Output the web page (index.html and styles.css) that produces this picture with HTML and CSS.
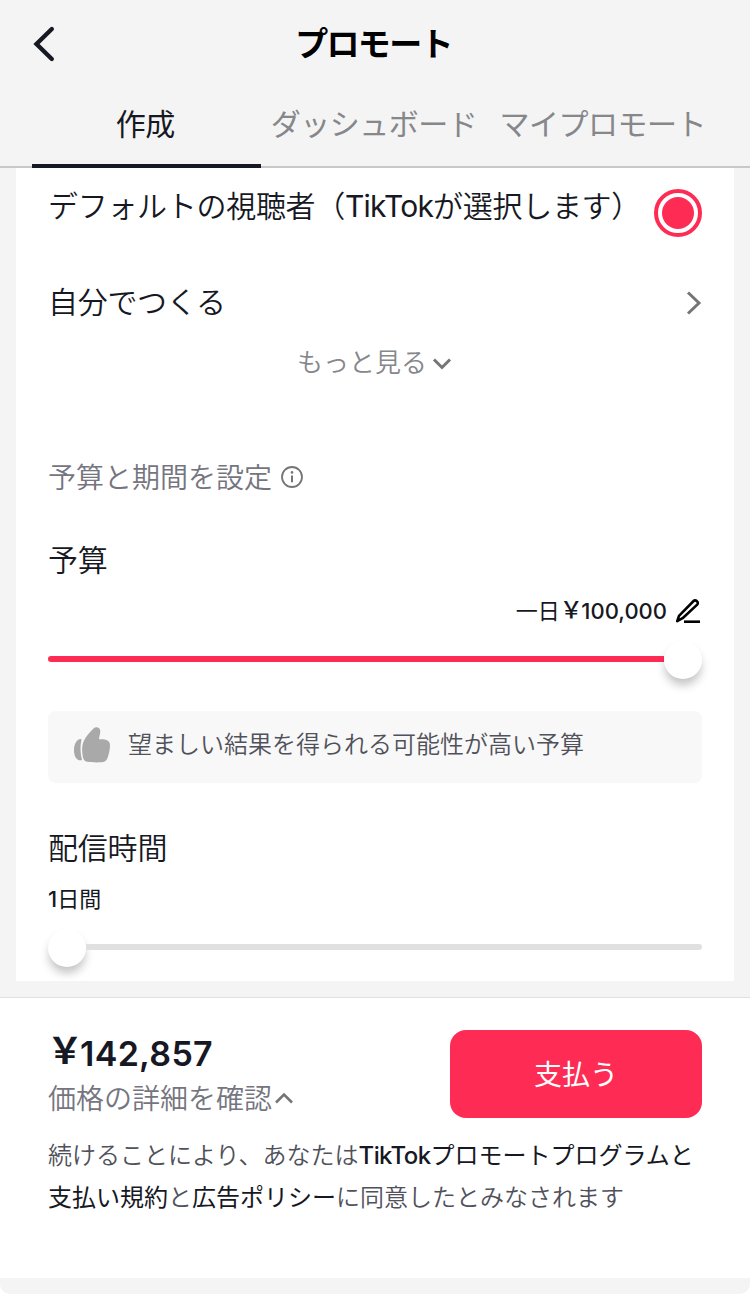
FILE: index.html
```html
<!DOCTYPE html>
<html lang="ja">
<head>
  <meta charset="UTF-8">
  <meta name="viewport" content="width=device-width, initial-scale=1.0">
  <title>プロモート</title>
  <link rel="stylesheet" href="styles.css">
</head>
<body>
  <div class="page">

    <!-- Top bar -->
    <header class="header">
      <svg class="back" width="24" height="38" viewBox="0 0 24 38" fill="none" stroke="#161823" stroke-width="4.4" stroke-linecap="round" stroke-linejoin="miter"><path d="M19.800 4 4.500 19l15.300 15"/></svg>
      <h1>プロモート</h1>
    </header>

    <nav class="tabs">
      <div class="tab active"><span>作成</span></div>
      <div class="tab"><span>ダッシュボード</span></div>
      <div class="tab"><span>マイプロモート</span></div>
    </nav>

    <main class="card">
      <!-- Audience -->
      <div class="row audience">
        <span>デフォルトの視聴者（<span class="latin">TikTok</span>が選択します）</span>
        <i class="radio"></i>
      </div>
      <div class="row custom">
        <span>自分でつくる</span>
        <svg width="16" height="24" viewBox="0 0 16 24" fill="none" stroke="#757575" stroke-width="3"><path d="M2 1.500 13 12 2 22.500"/></svg>
      </div>
      <div class="more">
        <span>もっと見る</span>
        <svg width="20" height="14" viewBox="0 0 20 14" fill="none" stroke="#757575" stroke-width="3"><path d="M2 2.500 10 10.500l8-8"/></svg>
      </div>

      <!-- Budget -->
      <div class="section-title">
        <span>予算と期間を設定</span>
        <svg width="24" height="24" viewBox="0 0 24 24" fill="none" stroke="#757575"><circle cx="12" cy="12" r="10" stroke-width="1.800"/><path d="M12 10.500v6.800" stroke-width="2"/><circle cx="12" cy="7.400" r="1.300" fill="#757575" stroke="none"/></svg>
      </div>
      <h2 class="budget-title">予算</h2>
      <div class="amount">
        <span>一日<b class="yen">￥</b><b>100,000</b></span>
        <svg width="26" height="26" viewBox="0 0 26 26" fill="none" stroke="#000" stroke-width="2.600" stroke-linejoin="round"><path d="M2.200 23.200 4 17.800 18.600 3a2.100 2.100 0 0 1 3 0l.6.6a2.100 2.100 0 0 1 0 3L7.600 20.200Z"/><path d="M9 23.700h16"/></svg>
      </div>
      <div class="slider full"><div class="track"></div><div class="thumb"></div></div>
      <div class="tip">
        <svg width="36" height="36" viewBox="0 0 36 36" fill="#a9a9a9"><path d="M6 12C2.500 13 0 17 0 23c0 5.500 2 9.500 5 10.200 1.500.3 3.200.2 3-.5C6.200 27 6.100 19 7.300 13.500c.3-1.300 0-1.800-1.300-1.500Z"/><path d="M9.800 14C12 9 16 5 19.500 1.500c2.500-2.500 6.800-1.300 6.800 2.500 0 3-1.200 5.600-1.300 8.200C29 12.200 36 12 36 18c0 5-1.200 9.500-2.500 13-1.100 3-3.200 4.200-6.200 4.300-5 .2-10.300.1-14-.5-3.300-.5-4-2.800-4.600-5.800C7.800 24.500 7.800 18.500 9.800 14Z"/></svg>
        <span>望ましい結果を得られる可能性が高い予算</span>
      </div>

      <!-- Duration -->
      <h2 class="duration-title">配信時間</h2>
      <div class="days"><b>1</b>日間</div>
      <div class="slider"><div class="track"></div><div class="thumb"></div></div>
    </main>

    <!-- Payment -->
    <footer class="footer">
      <div class="pay">
        <div class="total">
          <div class="price"><span class="yen">￥</span>142,857</div>
          <div class="detail">
            <span>価格の詳細を確認</span>
            <svg width="20" height="14" viewBox="0 0 20 14" fill="none" stroke="#757575" stroke-width="2.600"><path d="M2 11.500 10 3.500l8 8"/></svg>
          </div>
        </div>
        <button class="pay-button">支払う</button>
      </div>
      <p class="terms">続けることにより、あなたは<b><span class="latin">TikTok</span>プロモートプログラムと<br>支払い規約</b>と<b>広告ポリシー</b>に同意したとみなされます</p>
    </footer>

  </div>
</body>
</html>
```
FILE: styles.css
```css
* {
  box-sizing: border-box;
}

body {
  margin: 0;
  background: #fff;
  font-family: Inter, "Noto Sans CJK JP", sans-serif;
  color: #161823;
}

svg {
  display: block;
  flex: none;
}

.page {
  width: 750px;
  height: 1294px;
  background: #f4f4f4;
  border-radius: 0 0 10px 10px;
  overflow: hidden;
}

/* Header */
.header {
  display: grid;
  grid-template-columns: 100px 1fr 100px;
  align-items: center;
  height: 88px;
}

.back {
  margin-left: 32px;
}

h1 {
  margin: 0;
  padding: 0 3px 1px 0;
  font-size: 33px;
  line-height: 40px;
  font-weight: 700;
  text-align: center;
  letter-spacing: -1.7px;
  color: #000;
}

.tabs {
  display: flex;
  height: 80px;
  padding: 0 32px;
  box-shadow: inset 0 -2px #c8c8c8;
}

.tab {
  display: flex;
  flex: 1;
  align-items: center;
  justify-content: center;
  padding: 0 2px 5px 0;
  border-bottom: 4px solid transparent;
  font-size: 30px;
  line-height: 40px;
  letter-spacing: -0.5px;
  white-space: nowrap;
  color: #86878b;
}

.tab.active {
  color: #161823;
  border-bottom-color: #161823;
}

/* Card */
.card {
  height: 813px;
  margin: 0 16px;
  padding: 0 32px;
  background: #fff;
}

.row {
  display: flex;
  justify-content: space-between;
  font-size: 30px;
  line-height: 40px;
  font-weight: 350;
  letter-spacing: -0.3px;
}

.row .latin {
  font-weight: 400;
  letter-spacing: -0.8px;
}

.audience {
  padding-top: 18px;
  height: 114px;
}

.radio {
  width: 48px;
  height: 48px;
  margin-top: 3px;
  border: 4px solid #fe2c55;
  border-radius: 50%;
  padding: 4px;
  background: #fe2c55 content-box;
}

.custom {
  align-items: center;
  height: 40px;
}

.custom svg {
  margin-top: 2px;
}

.more {
  display: flex;
  align-items: center;
  justify-content: center;
  gap: 5px;
  height: 40px;
  margin-top: 19px;
  padding-right: 1px;
  font-size: 26px;
  font-weight: 350;
  color: #86878b;
}

.more span,
.section-title span {
  padding-bottom: 2px;
}

.more svg {
  margin-top: 5px;
}

.section-title {
  display: flex;
  align-items: center;
  gap: 8px;
  height: 40px;
  margin-top: 76px;
  font-size: 28px;
  font-weight: 350;
  color: #757580;
}

h2 {
  margin: 0;
  height: 40px;
  font-size: 30px;
  line-height: 40px;
  font-weight: 350;
  letter-spacing: -0.2px;
}

.budget-title {
  margin-top: 43px;
}

.amount {
  display: flex;
  align-items: center;
  justify-content: flex-end;
  gap: 8px;
  height: 30px;
  margin-top: 16px;
  padding-right: 1px;
  font-size: 22px;
}

.amount span {
  padding-bottom: 4px;
}

.amount b,
.days b {
  font-weight: 500;
}

.amount .yen {
  font-size: 23px;
  line-height: 1;
  letter-spacing: -1.5px;
  vertical-align: 1px;
}

/* Slider */
.slider {
  display: flex;
  align-items: center;
  height: 38px;
  margin-top: 15px;
}

.track {
  flex: 1;
  height: 6px;
  margin-top: -2px;
  border-radius: 0 3px 3px 0;
  background: #e0e0e0;
}

.thumb {
  order: -1;
  width: 38px;
  height: 38px;
  border-radius: 50%;
  background: #fff;
  box-shadow: 0 7px 10px -1px rgba(0, 0, 0, 0.24);
}

.full .track {
  border-radius: 3px 0 0 3px;
  background: #fe2c55;
}

.full .thumb {
  order: 1;
}

.tip {
  display: flex;
  align-items: center;
  gap: 18px;
  height: 72px;
  margin-top: 32px;
  padding: 0 26px 4px;
  border-radius: 8px;
  background: #f8f8f8;
  font-size: 24px;
  font-weight: 350;
  color: #50515a;
}

.tip span {
  padding-bottom: 5px;
}

.duration-title {
  margin-top: 45px;
}

.days {
  height: 30px;
  margin-top: 16px;
  font-size: 22px;
  line-height: 30px;
}

/* Footer */
.footer {
  height: 281px;
  margin-top: 16px;
  padding: 32px 48px 0;
  border-top: 1px solid #e0e0e0;
  background: #fff;
}

.pay {
  display: flex;
  justify-content: space-between;
}

.price {
  height: 48px;
  font-size: 34px;
  line-height: 48px;
  font-weight: 600;
  letter-spacing: 0.3px;
}

.price .yen {
  font-size: 36px;
  font-weight: 700;
  line-height: 1;
  letter-spacing: -3px;
  margin-left: -1px;
  vertical-align: 2px;
}

.detail {
  display: flex;
  align-items: center;
  gap: 2px;
  height: 40px;
  font-size: 28px;
  font-weight: 350;
  color: #757580;
}

.detail span {
  padding-bottom: 2px;
}

.pay-button {
  width: 252px;
  height: 88px;
  padding: 0 0 3px;
  border: none;
  border-radius: 16px;
  background: #fe2c55;
  color: #fff;
  font-family: inherit;
  font-size: 28px;
  font-weight: 400;
}

.terms {
  margin: 17px 0 0;
  font-size: 24px;
  line-height: 42px;
  font-weight: 350;
  white-space: nowrap;
  color: #50515a;
}

.terms b {
  font-weight: 400;
  color: #161823;
}

.terms .latin {
  font-weight: 500;
  letter-spacing: -0.6px;
}
```
